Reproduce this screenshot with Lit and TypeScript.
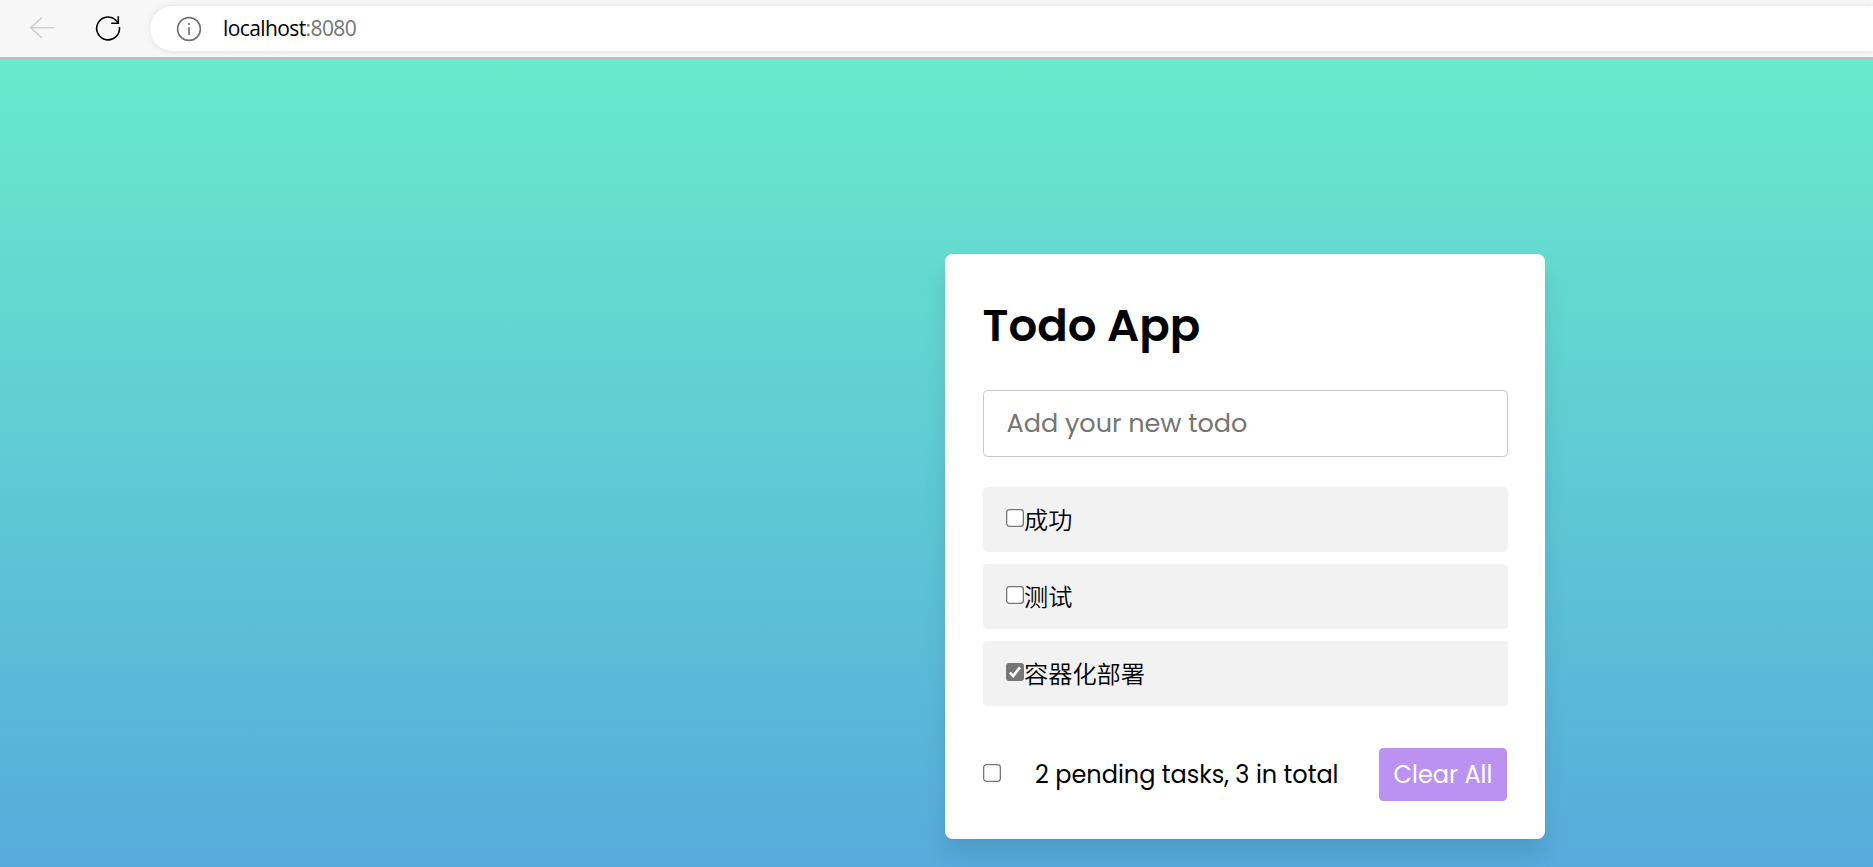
import { LitElement, html, css, svg } from "lit";
import { customElement, property, state } from "lit/decorators.js";

interface Todo {
  text: string;
  done: boolean;
}

@customElement("check-box")
class CheckBox extends LitElement {
  @property({ type: Boolean, reflect: true }) checked = false;

  static styles = css`
    :host {
      display: block;
      flex: none;
      width: 18px;
      height: 18px;
    }
    .box {
      display: block;
      width: 100%;
      height: 100%;
    }
  `;

  render() {
    return html`<svg class="box" viewBox="0 0 18 18" role="checkbox" aria-checked=${this.checked}>
      ${this.checked
        ? svg`<rect width="18" height="18" rx="3" fill="#767676"/>
            <path d="M3.9 9.6 7.2 12.9 14 4.3" fill="none" stroke="#fff" stroke-width="2.7"/>`
        : svg`<rect x=".65" y=".65" width="16.7" height="16.7" rx="2.8" fill="#fff" stroke="#767676" stroke-width="1.3"/>`}
    </svg>`;
  }
}

@customElement("browser-bar")
class BrowserBar extends LitElement {
  static styles = css`
    :host {
      display: flex;
      align-items: flex-start;
      box-sizing: border-box;
      height: 59px;
      flex: none;
      background: #f7f7f7;
      border-bottom: 2px solid #bcbcbc;
      padding: 6px 0 0 29px;
      overflow: hidden;
    }
    .icon {
      display: block;
      flex: none;
      width: 26px;
      height: 26px;
    }
    .back {
      margin-top: 9px;
    }
    .reload {
      margin: 9px 0 0 40px;
    }
    .address {
      display: flex;
      align-items: center;
      flex: 1;
      height: 45px;
      margin-left: 29px;
      padding-left: 26px;
      box-sizing: border-box;
      border-radius: 23px 0 0 23px;
      background: #fff;
      box-shadow: 0 0 6px rgba(0, 0, 0, 0.1);
    }
    .url {
      margin: 0 0 2px 21px;
      font: 21px/42px "Open Sans", "Noto Sans", sans-serif;
      letter-spacing: -0.6px;
      color: #000;
    }
    .port {
      color: #757575;
    }
  `;

  render() {
    return html`
      <svg class="icon back" viewBox="0 0 26 26" fill="none" stroke="#d0d0d0" stroke-width="1.6">
        <path d="M25 12.7H1.5M13 2.3 1.7 12.7 13 23" />
      </svg>
      <svg class="icon reload" viewBox="0 0 26 26" fill="none" stroke="#000" stroke-width="1.6">
        <path d="M24.4 12.2A11.4 11.4 0 1 1 20.7 5L23.3 8.2" />
        <path d="M23.3 1.2V8.3H16.2" />
      </svg>
      <div class="address">
        <svg class="icon" viewBox="0 0 26 26" fill="none" stroke="#707070" stroke-width="1.6">
          <circle cx="13" cy="13" r="11.4" />
          <path d="M13 11.2V19" />
          <circle cx="13" cy="8" r="1.1" fill="#707070" stroke="none" />
        </svg>
        <span class="url">localhost<span class="port">:8080</span></span>
      </div>
    `;
  }
}

@customElement("app-root")
class AppRoot extends LitElement {
  @state() private todos: Todo[] = [
    { text: "成功", done: false },
    { text: "测试", done: false },
    { text: "容器化部署", done: true },
  ];

  static styles = css`
    :host {
      display: flex;
      flex-direction: column;
      height: 867px;
      overflow: hidden;
      font-family: Poppins, Inter, "Noto Sans CJK SC", sans-serif;
      color: #000;
    }
    .page {
      flex: 1;
      min-height: 0;
      display: flex;
      align-items: flex-start;
      padding: 195px 0 0 945px;
      background: linear-gradient(to bottom, #68eacc 0, #497be8 1417px);
    }
    .card {
      box-sizing: border-box;
      width: 600px;
      height: 585px;
      padding: 38px 37.5px 0 38px;
      border-radius: 7.5px;
      background: #fff;
      box-shadow: 0 15px 22.5px rgba(0, 0, 0, 0.1);
    }
    .title {
      margin: 0 0 0 -0.5px;
      font-size: 45px;
      line-height: 68px;
      font-weight: 600;
    }
    .entry {
      display: block;
      box-sizing: border-box;
      width: 100%;
      height: 67px;
      margin: 30px 0;
      padding: 0 22.5px;
      border: 1px solid #c8c8c8;
      border-radius: 4.5px;
      font: 400 25.5px Poppins, Inter, sans-serif;
      outline: none;
    }
    .entry::placeholder {
      color: #757575;
    }
    .list {
      display: flex;
      flex-direction: column;
      gap: 12px;
      margin: 0;
      padding: 0;
      list-style: none;
    }
    .item {
      display: flex;
      align-items: flex-start;
      height: 65px;
      box-sizing: border-box;
      padding: 22px 22.5px 0;
      border-radius: 4.5px;
      background: #f2f2f2;
    }
    .label {
      margin: -2.5px 0 0 0.5px;
      font: 350 24.2px/24px "Noto Sans CJK SC", sans-serif;
    }
    .footer {
      display: flex;
      align-items: center;
      height: 53px;
      margin-top: 42px;
    }
    .all {
      margin-top: -3px;
    }
    .count {
      margin: 0 0 0 34px;
      font-size: 24px;
      white-space: nowrap;
    }
    .clear {
      width: 128px;
      height: 53px;
      margin: 0 0.5px 0 auto;
      padding: 0;
      border: 0;
      border-radius: 4.5px;
      background: #bb92f1;
      color: #fff;
      font: 400 24px Poppins, Inter, sans-serif;
      white-space: nowrap;
    }
  `;

  render() {
    const pending = this.todos.filter((t) => !t.done).length;
    return html`
      <browser-bar></browser-bar>
      <main class="page">
        <section class="card">
          <h1 class="title">Todo App</h1>
          <input class="entry" placeholder="Add your new todo" />
          <ul class="list">
            ${this.todos.map(
              (t) => html`<li class="item">
                <check-box ?checked=${t.done}></check-box><span class="label">${t.text}</span>
              </li>`
            )}
          </ul>
          <div class="footer">
            <check-box class="all"></check-box>
            <span class="count">${pending} pending tasks, ${this.todos.length} in total</span>
            <button class="clear">Clear All</button>
          </div>
        </section>
      </main>
    `;
  }
}
